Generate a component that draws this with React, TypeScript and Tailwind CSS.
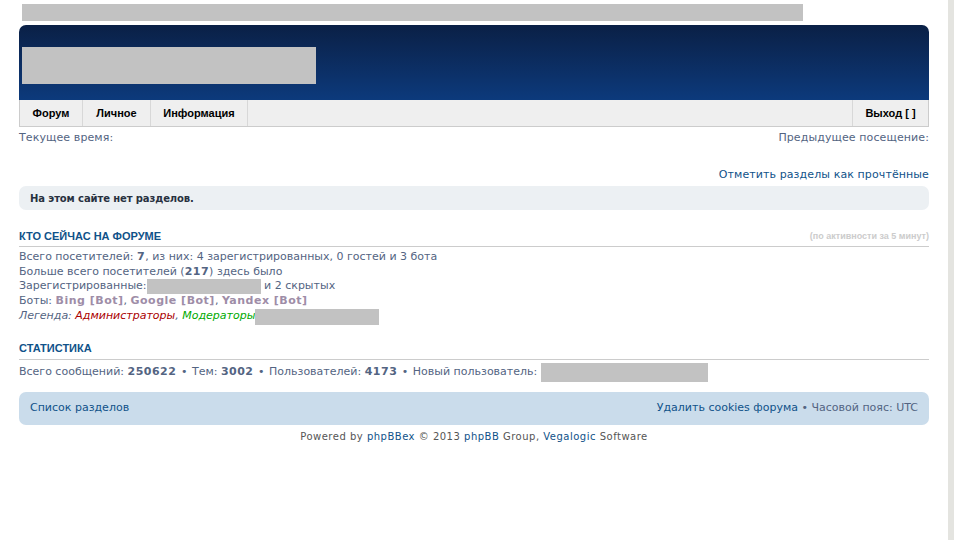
import React from "react";

const V = { fontFamily: '"DejaVu Sans", Verdana, sans-serif' };
const A = { fontFamily: '"Liberation Sans", Arial, sans-serif' };

function B({ children, className = "" }: { children: React.ReactNode; className?: string }) {
  return <b className={"tracking-[0.5px] " + className}>{children}</b>;
}

export default function App() {
  return (
    <div className="flex w-[954px] h-[540px] bg-white overflow-hidden" style={V}>
      <div className="w-[948px] px-[19px] text-[11px] text-[#536482]">
        <div className="h-[4px]" />
        <div className="ml-[3px] w-[781px] h-[17px] bg-[#c2c2c2]" />
        <div className="h-[4px]" />
        {/* header */}
        <div className="h-[75px] rounded-t-[7px] bg-gradient-to-b from-[#0a2046] to-[#0c3a7c] pt-[22px] pl-[3px]">
          <div className="w-[294px] h-[37px] bg-[#c2c2c2]" />
        </div>
        {/* nav */}
        <div className="flex h-[27px] bg-[#efefef] border border-t-0 border-[#cccccc] text-[11px] font-bold text-black" style={A}>
          <div className="w-[63px] flex items-center justify-center border-r border-[#d8d8d8]">Форум</div>
          <div className="w-[68px] flex items-center justify-center border-r border-[#d8d8d8]">Личное</div>
          <div className="w-[97px] flex items-center justify-center border-r border-[#d8d8d8]">Информация</div>
          <div className="flex-1" />
          <div className="w-[76px] flex items-center justify-center border-l border-[#d8d8d8]">Выход [ ]</div>
        </div>
        <div className="flex justify-between mt-[4px] leading-[14px] tracking-[0.1px]">
          <span>Текущее время:</span>
          <span>Предыдущее посещение:</span>
        </div>
        <div className="flex justify-end mt-[23px] leading-[14px] text-[#105289] tracking-[0.1px]">Отметить разделы как прочтённые</div>
        <div className="mt-[4px] h-[24px] rounded-[7px] bg-[#ecf0f3] flex items-center px-[11px] text-[10px] font-bold text-[#28313f] tracking-[-0.1px]">
          На этом сайте нет разделов.
        </div>
        {/* who is online */}
        <div className="mt-[19px] flex justify-between items-end border-b border-[#cccccc] pb-[3px] leading-[14px]">
          <span className="text-[11px] font-bold text-[#105289] uppercase" style={A}>Кто сейчас на форуме</span>
          <span className="text-[9px] font-bold text-[#cccccc]" style={A}>(по активности за 5 минут)</span>
        </div>
        <div className="mt-[3px] leading-[14.5px]">
          <div>Всего посетителей: <B>7</B>, из них: 4 зарегистрированных, 0 гостей и 3 бота</div>
          <div>Больше всего посетителей (<B>217</B>) здесь было</div>
          <div className="flex items-center">Зарегистрированные:<span className="inline-block w-[114px] h-[15px] bg-[#c2c2c2]" /><span>&nbsp;и 2 скрытых</span></div>
          <div>Боты: <B className="text-[#9e8da7]">Bing [Bot]</B>, <B className="text-[#9e8da7]">Google [Bot]</B>, <B className="text-[#9e8da7]">Yandex [Bot]</B></div>
          <div className="flex items-center italic"><span>Легенда:&nbsp;</span><span className="text-[#aa0000]">Администраторы</span><span>,&nbsp;</span><span className="text-[#00aa00]">Модераторы</span><span className="inline-block w-[124px] h-[16px] bg-[#c2c2c2]" /></div>
        </div>
        {/* stats */}
        <div className="mt-[16px] border-b border-[#cccccc] pb-[3px] leading-[14px]">
          <span className="text-[11px] font-bold text-[#105289] uppercase" style={A}>Статистика</span>
        </div>
        <div className="mt-[3px] flex items-center leading-[14px]">
          <span>Всего сообщений: <B>250622</B> <span className="px-[1px]">•</span> Тем: <B>3002</B> <span className="px-[1px]">•</span> Пользователей: <B>4173</B> <span className="px-[1px]">•</span> Новый пользователь:&nbsp;</span>
          <span className="inline-block w-[167px] h-[19px] bg-[#c2c2c2]" />
        </div>
        {/* footer */}
        <div className="mt-[10px] h-[33px] rounded-[7px] bg-[#cadceb] flex items-center justify-between px-[11px] text-[#105289] leading-[14px]">
          <span>Список разделов</span>
          <span>Удалить cookies форума <span className="text-[#536482]">• Часовой пояс: UTC</span></span>
        </div>
        <div className="mt-[6px] text-center text-[10px] text-[#555555] leading-[12px] tracking-[0.5px]">
          Powered by <span className="text-[#105289]">phpBBex</span> © 2013 <span className="text-[#105289]">phpBB</span> Group, <span className="text-[#105289]">Vegalogic</span> Software
        </div>
      </div>
      <div className="w-[6px] h-full bg-[#e4e4e0]" />
    </div>
  );
}
